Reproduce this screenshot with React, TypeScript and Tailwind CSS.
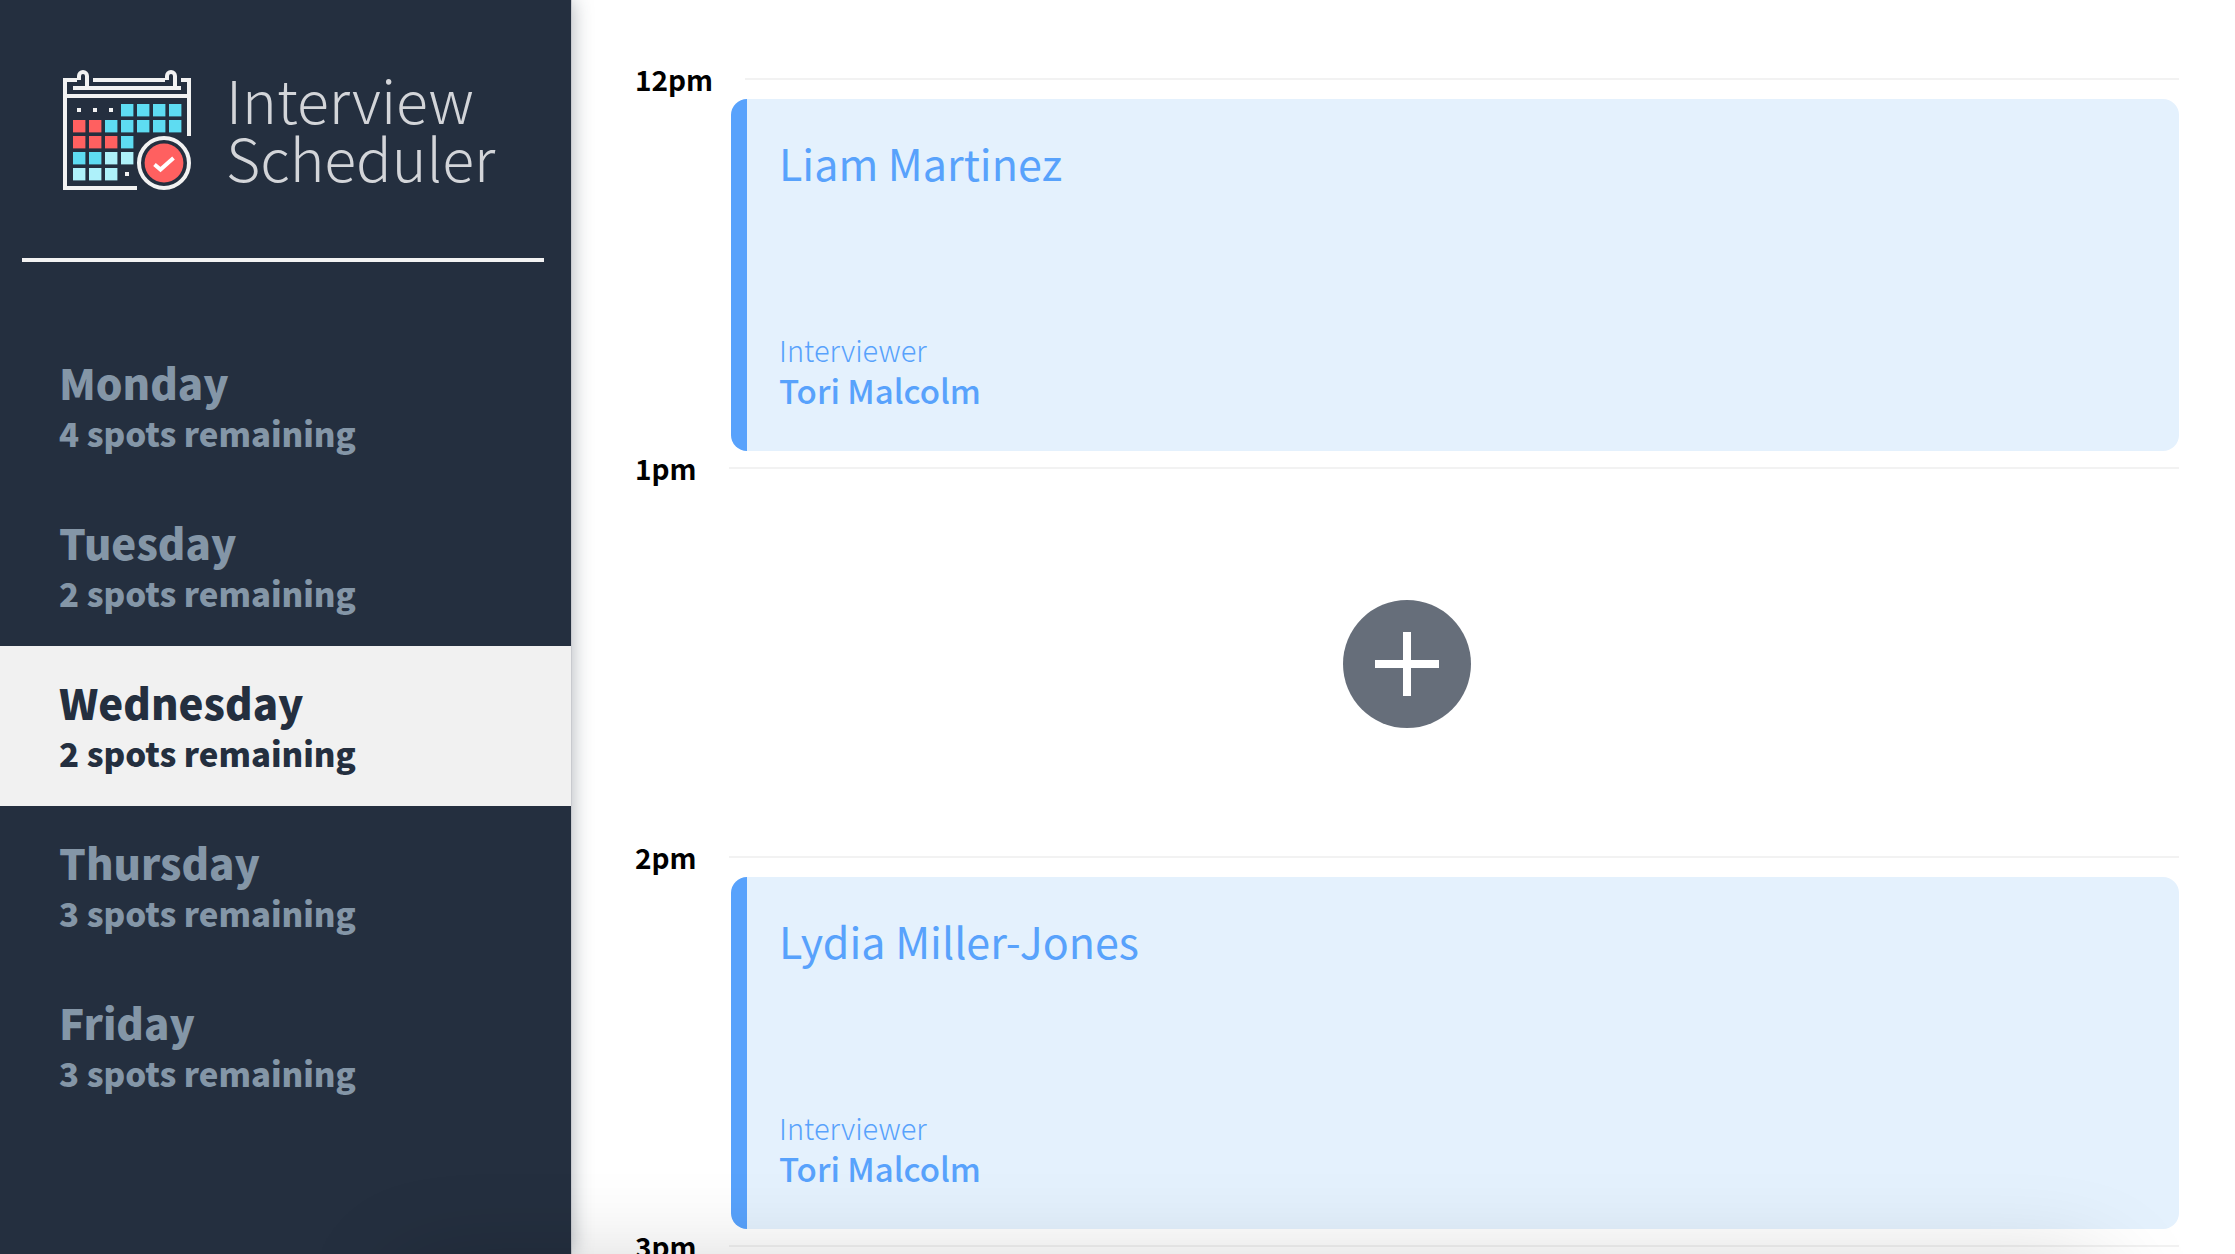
const days = [
  { name: "Monday", spots: 4 },
  { name: "Tuesday", spots: 2 },
  { name: "Wednesday", spots: 2 },
  { name: "Thursday", spots: 3 },
  { name: "Friday", spots: 3 },
];

type Interview = { student: string; interviewer: string };
type Slot = { time: string; interview?: Interview };

const slots: Slot[] = [
  { time: "12pm", interview: { student: "Liam Martinez", interviewer: "Tori Malcolm" } },
  { time: "1pm" },
  { time: "2pm", interview: { student: "Lydia Miller-Jones", interviewer: "Tori Malcolm" } },
  { time: "3pm" },
];

const BLUE = "#5edcf2";
const RED = "#ff6060";
const PALE = "#aef1fa";

// Calendar cells, one string per row: b = blue, r = red, p = pale, d = dot.
const cells = ["dddbbbb", "rrbbbbb", "rrrb", "bbpp", "pppd"];
const fills: Record<string, string> = { b: BLUE, r: RED, p: PALE };

function CalendarLogo() {
  return (
    <svg width="136" height="132" viewBox="0 0 136 132" fill="none" aria-hidden="true" className="shrink-0">
      <g stroke="#f2f2f2" strokeWidth="4">
        <path d="M17 18H5V126H77" />
        <path d="M33 18H105" />
        <path d="M121 18H129V74" />
        <path d="M13 26H121" />
        <path d="M5 34H129" />
        <path d="M19 18V14A4 4 0 0 1 27 14V26" />
        <path d="M107 18V14A4 4 0 0 1 115 14V26" />
        <circle cx="104" cy="101" r="25" />
      </g>
      {cells.map((row, r) =>
        row.split("").map((c, i) =>
          c === "d" ? (
            <rect key={`${r}-${i}`} x={17 + i * 16} y={46 + r * 16} width="4" height="4" fill="#f2f2f2" />
          ) : (
            <rect key={`${r}-${i}`} x={13 + i * 16} y={42 + r * 16} width="12.4" height="12.4" fill={fills[c]} />
          ),
        ),
      )}
      <circle cx="104" cy="101" r="19.4" fill={RED} />
      <path d="M94.5 102.5L100.5 107.5L113.5 96" stroke="#fff" strokeWidth="4" />
    </svg>
  );
}

function Appointment({ student, interviewer }: Interview) {
  return (
    <article className="ml-24 flex h-[352px] flex-col justify-between rounded-2xl border-l-[16px] border-[#58a2fc] bg-[#e4f1fd] px-8 pt-10 pb-[38px] text-[#58a2fc]">
      <h2 className="text-[43px] leading-[46px]">{student}</h2>
      <div>
        <h4 className="text-[29px] leading-9 font-light">Interviewer</h4>
        <h3 className="text-[33px] leading-[46px] font-medium">{interviewer}</h3>
      </div>
    </article>
  );
}

export default function App() {
  return (
    <div className="relative flex h-screen overflow-hidden bg-white font-['Noto_Sans_CJK_SC',sans-serif]">
      <aside className="z-10 w-[571px] shrink-0 bg-[#242f3f] pt-[62px] shadow-[1px_0_0_#c8cacf,0_0_20px_rgba(34,47,62,0.4)]">
        <div className="flex items-center gap-[30px] pl-[60px]">
          <CalendarLogo />
          <h1 className="text-[59px] leading-[58px] font-light text-[#d3d5d9]">
            Interview
            <br />
            Scheduler
          </h1>
        </div>
        <hr className="mt-16 mr-[27px] ml-[22px] h-1 border-0 bg-[#f2f2f2]" />
        <nav className="mt-16">
          <ul>
            {days.map((day) => {
              const selected = day.name === "Wednesday";
              return (
                <li key={day.name}>
                  <button
                    type="button"
                    aria-pressed={selected}
                    className={`block w-full px-[59px] pt-7 pb-[30px] text-left font-black ${
                      selected ? "bg-[#f1f1f1] text-[#242f3f]" : "text-[#8496a7]"
                    }`}
                  >
                    <span className="block text-[42px] leading-[56px]">{day.name}</span>
                    <span className="block text-[33px] leading-[46px]">{day.spots} spots remaining</span>
                  </button>
                </li>
              );
            })}
          </ul>
        </nav>
      </aside>

      <main className="min-w-0 flex-1 overflow-y-auto pt-[62px] pr-14 pl-16 [scrollbar-width:none]">
        {slots.map((slot) => (
          <section key={slot.time}>
            <header className="flex h-[37px] items-start gap-8">
              <h4 className="text-[28px] leading-[34px] font-bold text-black">{slot.time}</h4>
              <div className="mt-4 h-0.5 flex-1 bg-[#f2f2f2]" />
            </header>
            {slot.interview ? (
              <Appointment {...slot.interview} />
            ) : (
              <div className="flex h-[352px] items-center justify-center">
                <button type="button" aria-label="Add" className="size-32 rounded-full bg-[#666e7a]">
                  <svg viewBox="0 0 128 128" aria-hidden="true" className="size-full">
                    <path d="M64 32V96M32 64H96" stroke="#fff" strokeWidth="8" />
                  </svg>
                </button>
              </div>
            )}
          </section>
        ))}
      </main>

      <div className="pointer-events-none absolute inset-0 z-20 overflow-hidden">
        <div className="mt-[100vh] mr-[6%] ml-[18%] h-40 translate-y-5 shadow-[0_0_100px_rgba(0,0,0,0.22)]" />
      </div>
    </div>
  );
}
